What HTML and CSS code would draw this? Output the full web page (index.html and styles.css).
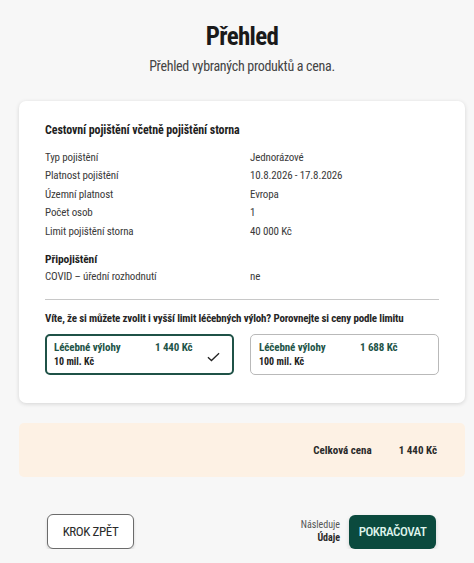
FILE: index.html
```html
<!DOCTYPE html>
<html lang="cs">
<head>
<meta charset="utf-8">
<title>Přehled</title>
<link rel="stylesheet" href="styles.css">
</head>
<body>
<main class="page">
  <header class="head">
    <h1 class="title">Přehled</h1>
    <p class="subtitle">Přehled vybraných produktů a cena.</p>
  </header>

  <section class="card">
    <h2 class="card-title">Cestovní pojištění včetně pojištění storna</h2>
    <dl class="rows">
      <div class="row"><dt>Typ pojištění</dt><dd>Jednorázové</dd></div>
      <div class="row"><dt>Platnost pojištění</dt><dd>10.8.2026 - 17.8.2026</dd></div>
      <div class="row"><dt>Územní platnost</dt><dd>Evropa</dd></div>
      <div class="row"><dt>Počet osob</dt><dd>1</dd></div>
      <div class="row"><dt>Limit pojištění storna</dt><dd>40 000 Kč</dd></div>
    </dl>
    <h3 class="sub-title">Připojištění</h3>
    <dl class="rows">
      <div class="row"><dt>COVID – úřední rozhodnutí</dt><dd>ne</dd></div>
    </dl>
    <hr class="divider">
    <p class="question">Víte, že si můžete zvolit i vyšší limit léčebných výloh? Porovnejte si ceny podle limitu</p>
    <div class="options">
      <div class="option selected">
        <div class="opt-main">
          <span class="opt-name">Léčebné výlohy</span>
          <span class="opt-price">1 440 Kč</span>
        </div>
        <div class="opt-limit">10 mil. Kč</div>
        <svg class="check" viewBox="0 0 14 10" width="13" height="10"><path d="M1 5.2 L4.8 8.8 L13 1" fill="none" stroke="#222" stroke-width="1.4"/></svg>
      </div>
      <div class="option">
        <div class="opt-main">
          <span class="opt-name">Léčebné výlohy</span>
          <span class="opt-price">1 688 Kč</span>
        </div>
        <div class="opt-limit">100 mil. Kč</div>
      </div>
    </div>
  </section>

  <section class="total">
    <span class="total-label">Celková cena</span>
    <span class="total-value">1 440 Kč</span>
  </section>

  <nav class="actions">
    <button class="btn btn-back" type="button">KROK ZPĚT</button>
    <div class="next">
      <div class="next-info">
        <span class="next-label">Následuje</span>
        <span class="next-step">Údaje</span>
      </div>
      <button class="btn btn-next" type="button">POKRAČOVAT</button>
    </div>
  </nav>
</main>
</body>
</html>
```
FILE: styles.css
```css
* { box-sizing: border-box; }
html, body { margin: 0; padding: 0; }
body {
  background: #f7f7f7;
  font-family: "Roboto", "Liberation Sans", sans-serif;
  font-stretch: 75%;
  color: #222;
}
.page {
  padding: 0 9px 0 19px;
}
.head {
  text-align: center;
  padding-top: 22px;
}
.title {
  margin: 0;
  font-size: 25px;
  line-height: 30px;
  font-weight: 700;
  letter-spacing: -0.7px;
  color: #1a1a1a;
}
.subtitle {
  margin: 5px 0 0;
  font-size: 14px;
  line-height: 18px;
  letter-spacing: -0.3px;
  color: #444;
}
.card {
  margin-top: 26px;
  background: #fff;
  border-radius: 7px;
  box-shadow: 0 1px 4px rgba(0,0,0,0.14);
  padding: 21px 26px 28px;
}
.card-title {
  margin: 0;
  font-size: 12px;
  line-height: 16px;
  font-weight: 700;
  letter-spacing: -0.1px;
  color: #1f1f1f;
}
.rows { margin: 11px 0 0; }
.row {
  display: grid;
  grid-template-columns: 205px 1fr;
  font-size: 11px;
  line-height: 18.4px;
  letter-spacing: -0.15px;
  color: #3a3a3a;
}
.row dt, .row dd { margin: 0; }
.sub-title {
  margin: 9px 0 0;
  font-size: 11.5px;
  line-height: 18px;
  font-weight: 700;
  letter-spacing: -0.1px;
  color: #1f1f1f;
}
.sub-title + .rows { margin-top: 0; }
.divider {
  margin: 13px 0 0;
  border: 0;
  border-top: 1.5px solid #c8c8c8;
}
.question {
  margin: 10px 0 0;
  font-size: 11px;
  line-height: 18px;
  font-weight: 700;
  letter-spacing: -0.18px;
  color: #262626;
  white-space: nowrap;
}
.options {
  margin-top: 6px;
  display: grid;
  grid-template-columns: 1fr 1fr;
  gap: 16px;
}
.option {
  position: relative;
  height: 41px;
  border: 1px solid #b9b9b9;
  border-radius: 5px;
  padding: 5px 8px 0 8px;
}
.option.selected {
  border: 2px solid #1f5247;
  padding: 4px 7px 0 7px;
}
.opt-main {
  display: grid;
  grid-template-columns: 101px auto;
  font-size: 11px;
  line-height: 15px;
  font-weight: 700;
  letter-spacing: -0.1px;
  color: #1e5448;
}
.opt-limit {
  font-size: 10px;
  line-height: 13px;
  font-weight: 700;
  color: #222;
}
.check {
  position: absolute;
  right: 12px;
  top: 16px;
}
.total {
  margin-top: 20px;
  height: 54px;
  background: #fdf1e4;
  border-radius: 5px;
  display: flex;
  justify-content: flex-end;
  align-items: center;
  gap: 27px;
  padding-right: 28px;
  font-size: 11px;
  font-weight: 700;
  color: #2a2a2a;
}
.actions {
  margin-top: 37px;
  display: flex;
  justify-content: space-between;
  align-items: center;
  padding: 0 29px 0 28px;
}
.btn {
  font-family: inherit;
  font-stretch: 75%;
  font-size: 13px;
  font-weight: 400;
  letter-spacing: -0.4px;
  border-radius: 6px;
  cursor: pointer;
}
.btn-back {
  width: 87px;
  height: 35px;
  background: #fff;
  border: 1px solid #6b6b6b;
  color: #2a2a2a;
  box-shadow: 0 2px 3px rgba(0,0,0,0.15);
}
.next {
  display: flex;
  align-items: center;
  gap: 9px;
}
.next-info {
  display: flex;
  flex-direction: column;
  align-items: flex-end;
  font-size: 10px;
  line-height: 13px;
  margin-top: -2px;
  color: #555;
}
.next-step { font-weight: 700; color: #2a2a2a; }
.btn-next {
  width: 87px;
  height: 34px;
  background: #0b4a3e;
  border: 0;
  font-weight: 500;
  letter-spacing: -0.5px;
  color: #dff4ec;
  box-shadow: 0 2px 4px rgba(0,0,0,0.15);
}
```
